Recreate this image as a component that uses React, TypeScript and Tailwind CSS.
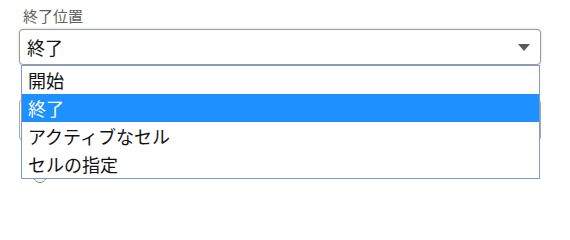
const FONT = { fontFamily: '"Noto Sans CJK JP", "Noto Sans", sans-serif' };

const options = ['開始', '終了', 'アクティブなセル', 'セルの指定'];

function Caret() {
  return (
    <svg width="12" height="7" viewBox="0 0 12 7" className="shrink-0">
      <path d="M0 0 L12 0 L6 7 Z" fill="#595959" />
    </svg>
  );
}

export default function App() {
  const selected = '終了';
  return (
    <div className="w-[570px] h-[200px] bg-white overflow-hidden" style={FONT}>
      <div className="pl-[19px] pt-[6px] w-[541px]">
        <label className="block text-[15px] leading-[20px] pl-[4px] text-[#616161]">終了位置</label>

        <div className="relative mt-[3px]">
          <div className="flex items-center justify-between h-[36px] pl-[7px] pr-[10px] border border-[#9a9a9a] rounded-[4px] shadow-[0_0_3px_rgba(0,0,0,0.18)] bg-white">
            <span className="text-[18px] leading-[24px] text-[#111]">{selected}</span>
            <Caret />
          </div>

          {/* open dropdown list */}
          <ul className="absolute z-10 left-[2px] top-[36px] w-[519px] border border-[#7b9bd0] bg-white">
            {options.map((opt) => (
              <li
                key={opt}
                className={
                  opt === selected
                    ? 'h-[28px] pl-[6px] text-[18px] leading-[28px] bg-[#1e90ff] text-white'
                    : 'h-[28px] pl-[6px] text-[18px] leading-[28px] text-[#111]'
                }
              >
                {opt}
              </li>
            ))}
          </ul>
        </div>

        {/* content underneath the open list */}
        <div className="mt-[34px] h-[42px] border border-[#a8a8a8] rounded-[4px] w-[522px]" />
        <div className="mt-[28px] ml-[14px] w-[14px] h-[14px] rounded-full border border-[#8a8a8a]" />
      </div>
    </div>
  );
}
